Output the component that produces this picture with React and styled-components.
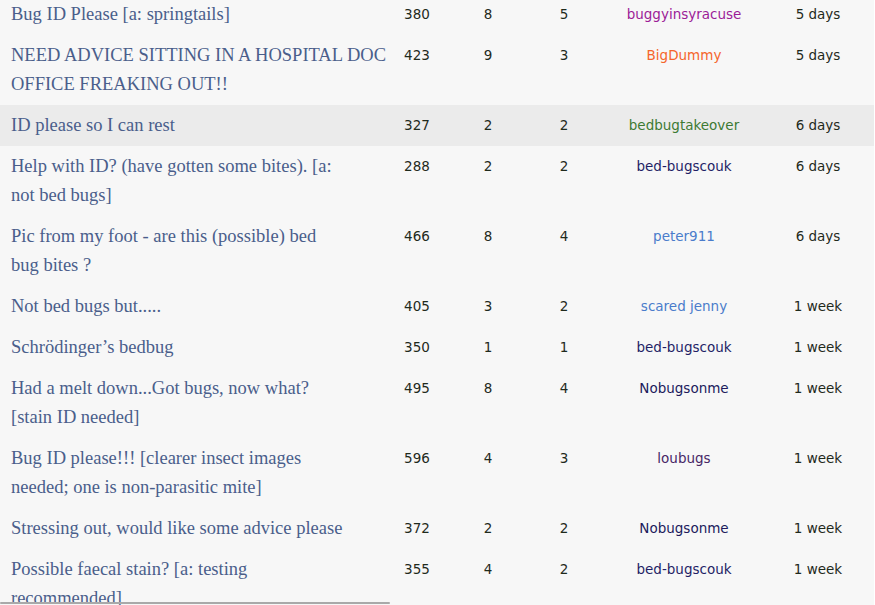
import React from "react";
import styled, { createGlobalStyle } from "styled-components";

const Global = createGlobalStyle`
  html, body { margin: 0; padding: 0; background: #ffffff; overflow: hidden; }
  body { width: 875px; height: 605px; }
`;

const Page = styled.div`
  width: 874px;
  height: 605px;
  background: #f7f7f7;
  overflow: hidden;
  position: relative;
`;

const List = styled.div`
  margin-top: -6px;
  display: flex;
  flex-direction: column;
`;

const Row = styled.div`
  display: grid;
  grid-template-columns: 380px 74px 68px 84px 156px 112px;
  align-items: start;
  padding: 6px 0;
  background: ${(p) => (p.$hl ? "#ebebeb" : "transparent")};
`;

const Title = styled.div`
  padding-left: 11px;
  font-family: "Liberation Serif", "Times New Roman", serif;
  font-size: 18.5px;
  line-height: 29px;
  color: #4a5e8b;
  white-space: nowrap;
`;

const Cell = styled.div`
  text-align: center;
  font-family: "DejaVu Sans", Verdana, sans-serif;
  font-size: 13.5px;
  line-height: 29px;
  color: ${(p) => p.$color || "#1f2a1c"};
`;

const Scroll = styled.div`
  position: absolute;
  left: 0;
  bottom: 1px;
  width: 390px;
  height: 2px;
  border-radius: 1px;
  background: #a9a9a9;
`;

const rows = [
  { t: ["Bug ID Please [a: springtails]"], v: 380, r: 8, p: 5, u: "buggyinsyracuse", c: "#9c1c97", a: "5 days" },
  { t: ["NEED ADVICE SITTING IN A HOSPITAL DOC", "OFFICE FREAKING OUT!!"], v: 423, r: 9, p: 3, u: "BigDummy", c: "#f5652b", a: "5 days" },
  { t: ["ID please so I can rest"], v: 327, r: 2, p: 2, u: "bedbugtakeover", c: "#3d7a33", a: "6 days", hl: true },
  { t: ["Help with ID? (have gotten some bites). [a:", "not bed bugs]"], v: 288, r: 2, p: 2, u: "bed-bugscouk", c: "#1f1f66", a: "6 days" },
  { t: ["Pic from my foot - are this (possible) bed", "bug bites ?"], v: 466, r: 8, p: 4, u: "peter911", c: "#4a7ccb", a: "6 days" },
  { t: ["Not bed bugs but....."], v: 405, r: 3, p: 2, u: "scared jenny", c: "#4a7ccb", a: "1 week" },
  { t: ["Schrödinger’s bedbug"], v: 350, r: 1, p: 1, u: "bed-bugscouk", c: "#1f1f66", a: "1 week" },
  { t: ["Had a melt down...Got bugs, now what?", "[stain ID needed]"], v: 495, r: 8, p: 4, u: "Nobugsonme", c: "#201a5c", a: "1 week" },
  { t: ["Bug ID please!!! [clearer insect images", "needed; one is non-parasitic mite]"], v: 596, r: 4, p: 3, u: "loubugs", c: "#472766", a: "1 week" },
  { t: ["Stressing out, would like some advice please"], v: 372, r: 2, p: 2, u: "Nobugsonme", c: "#201a5c", a: "1 week" },
  { t: ["Possible faecal stain? [a: testing", "recommended]"], v: 355, r: 4, p: 2, u: "bed-bugscouk", c: "#1f1f66", a: "1 week" },
];

export default function App() {
  return (
    <Page>
      <Global />
      <List>
        {rows.map((row, i) => (
          <Row key={i} $hl={row.hl}>
            <Title>
              {row.t.map((line, j) => (
                <React.Fragment key={j}>
                  {j > 0 && <br />}
                  {line}
                </React.Fragment>
              ))}
            </Title>
            <Cell>{row.v}</Cell>
            <Cell>{row.r}</Cell>
            <Cell>{row.p}</Cell>
            <Cell $color={row.c}>{row.u}</Cell>
            <Cell>{row.a}</Cell>
          </Row>
        ))}
      </List>
      <Scroll />
    </Page>
  );
}
